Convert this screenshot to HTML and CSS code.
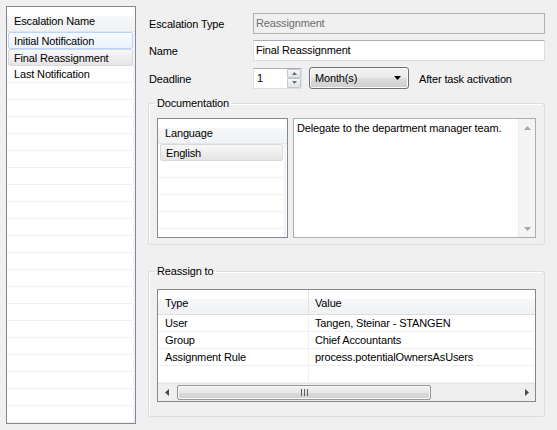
FILE: index.html
```html
<!DOCTYPE html>
<html lang="en">
<head>
    <meta charset="UTF-8">
    <title>Escalation Settings</title>
    <link rel="stylesheet" href="styles.css">
</head>
<body>
    <div class="window">
        <div class="list escalations">
            <div class="list-head">Escalation Name</div>
            <div class="row hot">Initial Notification</div>
            <div class="row sel">Final Reassignment</div>
            <div class="row">Last Notification</div>
            <div class="row"></div><div class="row"></div><div class="row"></div><div class="row"></div>
            <div class="row"></div><div class="row"></div><div class="row"></div><div class="row"></div>
            <div class="row"></div><div class="row"></div><div class="row"></div><div class="row"></div>
            <div class="row"></div><div class="row"></div><div class="row"></div><div class="row"></div>
            <div class="row"></div><div class="row"></div><div class="row"></div><div class="row"></div>
        </div>

        <div class="details">
            <div class="form">
                <label>Escalation Type</label>
                <div class="textbox disabled">Reassignment</div>

                <label>Name</label>
                <div class="textbox">Final Reassignment</div>

                <label class="low">Deadline</label>
                <div class="deadline">
                    <div class="spinner">
                        <span class="spin-value">1</span>
                        <div class="spin-buttons">
                            <div class="spin-btn">
                                <svg width="5" height="3" viewBox="0 0 5 3"><path d="M0 3 L2.5 0 L5 3 Z" fill="#5b6f8e"/></svg>
                            </div>
                            <div class="spin-btn">
                                <svg width="5" height="3" viewBox="0 0 5 3"><path d="M0 0 L5 0 L2.5 3 Z" fill="#5b6f8e"/></svg>
                            </div>
                        </div>
                    </div>
                    <div class="combo">
                        <span>Month(s)</span>
                        <svg width="7" height="4" viewBox="0 0 7 4"><path d="M0 0 L7 0 L3.5 4 Z" fill="#000"/></svg>
                    </div>
                    <span class="after">After task activation</span>
                </div>
            </div>

            <fieldset class="group doc">
                <legend>Documentation</legend>
                <div class="doc-body">
                    <div class="list languages">
                        <div class="list-head">Language</div>
                        <div class="row sel">English</div>
                        <div class="row"></div><div class="row"></div><div class="row"></div>
                        <div class="row"></div><div class="row"></div>
                    </div>
                    <div class="memo">
                        <div class="memo-text">Delegate to the department manager team.</div>
                        <div class="vscroll">
                            <div class="sb-btn">
                                <svg width="7" height="4" viewBox="0 0 7 4"><path d="M0 4 L3.5 0 L7 4 Z" fill="#a6a6a6"/></svg>
                            </div>
                            <div class="sb-btn">
                                <svg width="7" height="4" viewBox="0 0 7 4"><path d="M0 0 L7 0 L3.5 4 Z" fill="#a6a6a6"/></svg>
                            </div>
                        </div>
                    </div>
                </div>
            </fieldset>

            <fieldset class="group reassign">
                <legend>Reassign to</legend>
                <div class="grid">
                    <div class="grid-head">
                        <div class="cell">Type</div>
                        <div class="cell">Value</div>
                    </div>
                    <div class="grid-row">
                        <div class="cell">User</div>
                        <div class="cell">Tangen, Steinar - STANGEN</div>
                    </div>
                    <div class="grid-row">
                        <div class="cell">Group</div>
                        <div class="cell">Chief Accountants</div>
                    </div>
                    <div class="grid-row">
                        <div class="cell">Assignment Rule</div>
                        <div class="cell">process.potentialOwnersAsUsers</div>
                    </div>
                    <div class="grid-row">
                        <div class="cell"></div>
                        <div class="cell"></div>
                    </div>
                    <div class="hscroll">
                        <div class="sb-btn">
                            <svg width="4" height="7" viewBox="0 0 4 7"><path d="M4 0 L4 7 L0 3.5 Z" fill="#4a4a4a"/></svg>
                        </div>
                        <div class="track">
                            <div class="thumb">
                                <svg width="7" height="7" viewBox="0 0 7 7">
                                    <path d="M0.5 0 V7 M3.5 0 V7 M6.5 0 V7" stroke="#5e5e5e" stroke-width="1"/>
                                </svg>
                            </div>
                        </div>
                        <div class="sb-btn">
                            <svg width="4" height="7" viewBox="0 0 4 7"><path d="M0 0 L4 3.5 L0 7 Z" fill="#4a4a4a"/></svg>
                        </div>
                    </div>
                </div>
            </fieldset>
        </div>
    </div>
</body>
</html>
```

FILE: styles.css
```css
* {
    box-sizing: border-box;
}

body {
    margin: 0;
    background: #f0f0f0;
    font-family: "Liberation Sans", Arial, sans-serif;
    font-size: 11px;
    letter-spacing: -0.15px;
    color: #000;
}

.window {
    display: flex;
    gap: 12px;
    width: 557px;
    height: 430px;
    padding: 6px 0 0 6px;
}

/* list views */
.list {
    border: 1px solid #828790;
    background: #fff;
    overflow: hidden;
}

.escalations {
    width: 130px;
    height: 418px;
    background: linear-gradient(to left, #f1f4fa 2px, #fff 2px);
}

.list-head {
    height: 25px;
    padding: 8px 0 0 7px;
    line-height: 13px;
    white-space: nowrap;
    border-bottom: 1px solid #e3e5e8;
    background: linear-gradient(#fff 0, #fff 9px, #f6f7f8 9px, #f1f2f4 100%);
}

.row {
    width: calc(100% - 2px);
    height: 17px;
    padding-left: 7px;
    line-height: 17px;
    white-space: nowrap;
    border-bottom: 1px solid #f0f0f0;
}

.row.hot,
.row.sel {
    width: calc(100% - 3px);
    margin-left: 1px;
    padding-left: 5px;
    line-height: 16px;
    border: 1px solid;
    border-radius: 2px;
}

.row.hot {
    border-color: #b8d6fb;
    background: linear-gradient(#fafbfd, #ebf3fd);
}

.row.sel {
    border-color: #d9d9d9;
    background: linear-gradient(#f8f8f8, #e5e5e5);
}

/* right side */
.details {
    display: flex;
    flex-direction: column;
    width: 398px;
    padding-top: 7px;
}

.form {
    display: grid;
    grid-template-columns: 105px 292px;
    row-gap: 6px;
    align-items: center;
}

.form label {
    padding: 2px 0 0 1px;
    line-height: 13px;
}

.form label.low {
    padding-top: 3px;
}

.textbox {
    height: 21px;
    padding: 0 3px 0 2px;
    line-height: 19px;
    background: #fff;
    border: 1px solid #dbdfe6;
    border-top-color: #abadb3;
    white-space: nowrap;
}

.textbox.disabled {
    background: #f0f0f0;
    border-color: #adb2b5;
    color: #6d6d6d;
}

.deadline {
    display: flex;
    align-items: center;
    height: 22px;
}

.spinner {
    display: flex;
    width: 49px;
    height: 21px;
    background: #fff;
    border: 1px solid #dbdfe6;
    border-top-color: #abadb3;
}

.spin-value {
    flex: 1;
    padding-left: 3px;
    line-height: 19px;
}

.spin-buttons {
    display: flex;
    flex-direction: column;
    width: 14px;
}

.spin-btn {
    flex: 1;
    display: flex;
    align-items: center;
    justify-content: center;
    border: 1px solid #c3c8cf;
    border-radius: 1px;
    background: linear-gradient(#f7f7f7, #e2e2e2);
}

.combo {
    display: flex;
    align-items: center;
    justify-content: space-between;
    width: 100px;
    height: 22px;
    margin-left: 7px;
    padding: 0 7px 0 5px;
    border: 1px solid #707070;
    border-radius: 3px;
    box-shadow: inset 0 0 0 1px #fbfbfb;
    background: linear-gradient(#f2f2f2 0, #ebebeb 50%, #dddddd 50%, #cfcfcf 100%);
}

.after {
    margin-left: 10px;
    padding-top: 2px;
    white-space: nowrap;
}

/* group boxes */
.group {
    width: 397px;
    margin: 0;
    padding: 8px 8px 6px;
    border: 1px solid #d5dfe5;
    border-radius: 3px;
    box-shadow: inset 1px 1px 0 #fff;
}

.group legend {
    margin-left: -3px;
    padding: 0 3px;
    line-height: 13px;
}

.doc {
    margin-top: 8px;
}

.reassign {
    margin-top: 20px;
    padding: 11px 8px 14px;
}

.doc-body {
    display: flex;
    gap: 5px;
}

.languages {
    width: 131px;
    height: 120px;
    background: linear-gradient(to left, #fff 1px, #eef1f6 1px, #eef1f6 3px, #fff 3px);
}

.languages .row {
    width: calc(100% - 4px);
}

.languages .row.sel {
    width: calc(100% - 6px);
    margin-left: 2px;
}

.memo {
    display: flex;
    width: 243px;
    height: 120px;
    background: #fff;
    border: 1px solid #abadb3;
}

.memo-text {
    flex: 1;
    padding: 3px 0 0 3px;
    line-height: 13px;
}

.vscroll {
    display: flex;
    flex-direction: column;
    justify-content: space-between;
    width: 17px;
    background: #f4f4f4;
    border-left: 1px solid #ebebeb;
}

.sb-btn {
    display: flex;
    align-items: center;
    justify-content: center;
    width: 17px;
    height: 17px;
}

/* data grid */
.grid {
    display: flex;
    flex-direction: column;
    width: 379px;
    height: 113px;
    background: #fff;
    border: 1px solid #828790;
}

.grid-head,
.grid-row {
    display: grid;
    grid-template-columns: 151px 1fr;
}

.grid-head {
    height: 25px;
    border-bottom: 1px solid #dcdde0;
    background: linear-gradient(#fff 0, #fff 9px, #f6f7f8 9px, #f1f2f4 100%);
}

.grid-head .cell {
    padding: 7px 0 0 7px;
    line-height: 13px;
}

.grid-head .cell:first-child {
    border-right: 1px solid #e2e3e5;
}

.grid-head .cell + .cell {
    padding-left: 6px;
}

.grid-row {
    height: 17px;
    margin-right: 1px;
    border-bottom: 1px solid #f0f0f0;
}

.grid-row .cell {
    padding-left: 7px;
    line-height: 16px;
    white-space: nowrap;
}

.grid-row .cell:first-child {
    border-right: 1px solid #edf0f5;
}

.grid-row .cell + .cell {
    padding-left: 6px;
}

.hscroll {
    display: flex;
    height: 18px;
    background: #efefef;
    border-top: 1px solid #e6e6e6;
}

.hscroll .sb-btn {
    height: 17px;
}

.track {
    flex: 1;
}

.thumb {
    display: flex;
    align-items: center;
    justify-content: center;
    width: 254px;
    height: 15px;
    margin: 1px 0 0 2px;
    border: 1px solid #979797;
    border-radius: 2px;
    box-shadow: inset 0 0 0 1px #f8f8f8;
    background: linear-gradient(#f3f3f3 0, #e8e8e8 50%, #d9d9d9 50%, #d0d0d0 100%);
}
```
